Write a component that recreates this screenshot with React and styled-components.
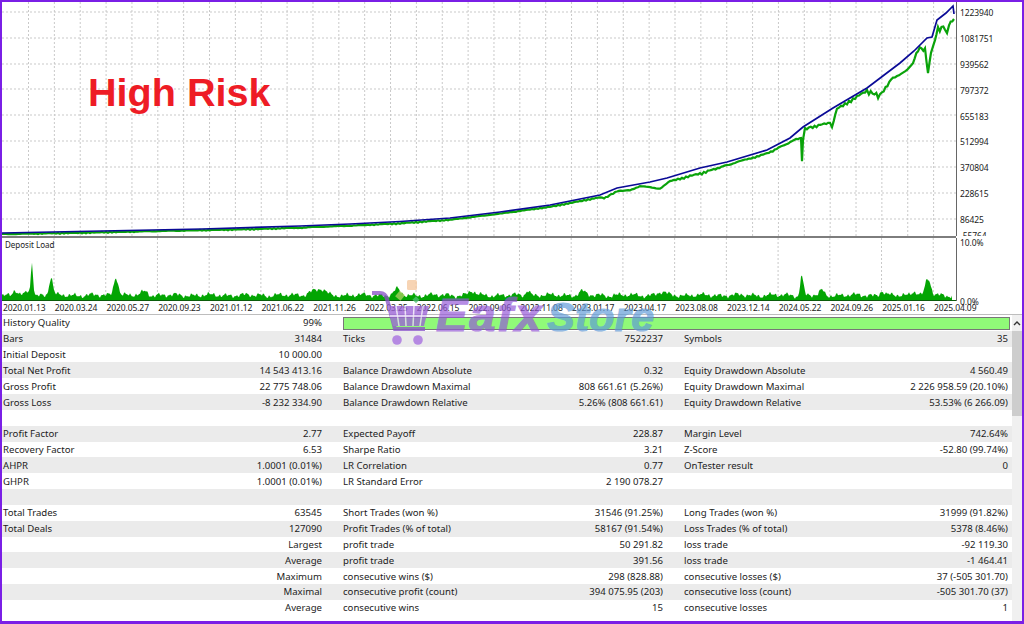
import React from "react";
import styled, { createGlobalStyle } from "styled-components";

const GlobalStyle = createGlobalStyle`
  html, body { margin: 0; padding: 0; background: #fff; }
  body { width: 1024px; height: 624px; overflow: hidden; font-family: "Noto Sans", "Open Sans", sans-serif; }
`;

const CHART_W = 954;

const balance = [
  [0, 231], [100, 229], [200, 227], [298, 224], [348, 222], [398, 219.5], [448, 216], [498, 210], [548, 203],
  [598, 193], [615, 186], [648, 180], [665, 176], [698, 166], [725, 160], [765, 148], [788, 136], [801, 125],
  [831, 106], [865, 86], [898, 61], [912, 49], [925, 36], [930, 35], [935, 18], [944, 11], [951, 4], [952, 12],
];

const equity = [
  [0, 232], [100, 230], [200, 228], [298, 225.5], [348, 223.5], [398, 221], [448, 217.5], [498, 211.5],
  [548, 204.5], [598, 195], [602, 196], [615, 189], [628, 188], [638, 184], [658, 186], [668, 179], [678, 176],
  [698, 171], [731, 161], [765, 151], [796, 136], [799, 136], [800, 158], [801, 135], [803, 126], [828, 120],
  [830, 125], [835, 106], [865, 88], [878, 92], [891, 75], [905, 68], [911, 61], [916, 45], [923, 46], [926, 71],
  [929, 50], [933, 38], [936, 25], [943, 24], [945, 31], [947, 20], [952, 17],
];

// equity dips under the straight segments, harder towards the right of the test
const grainy = (pts) => {
  const out = [];
  for (let i = 0; i < pts.length - 1; i++) {
    const [x0, y0] = pts[i];
    const [x1, y1] = pts[i + 1];
    const steps = Math.max(1, Math.round((x1 - x0) / 2));
    for (let s = 0; s < steps; s++) {
      const x = x0 + ((x1 - x0) * s) / steps;
      const y = y0 + ((y1 - y0) * s) / steps;
      const amp = x > 860 ? 5 : x > 640 ? 3 : 1;
      const wob = Math.abs(Math.sin(x * 2.3) * Math.cos(x * 0.71));
      out.push([x, y + wob * wob * amp]);
    }
  }
  out.push(pts[pts.length - 1]);
  return out;
};

const toLine = (pts) => pts.map(([x, y]) => `${x.toFixed(1)},${y.toFixed(1)}`).join(" ");

const spikes = [
  [30, 33, 1.1], [49, 18, 1.8], [114, 19, 2.2], [13, 5, 2], [26, 4, 2], [143, 4, 3], [320, 4, 4], [395, 6, 3],
  [470, 4, 3], [526, 5, 2], [580, 4, 3], [660, 3, 4], [799, 17, 1], [801, 11, 1.2], [820, 5, 2], [880, 4, 2],
  [912, 4, 3], [925, 13, 2], [928, 8, 2], [312, 4, 6],
];

const loadArea = () => {
  const pts = [[0, 63]];
  for (let x = 0; x <= 950; x += 1) {
    const noise =
      4 +
      1.3 * Math.sin(x * 0.37) +
      1.1 * Math.sin(x * 1.13 + 1) +
      0.8 * Math.sin(x * 2.17) +
      1.3 * Math.abs(Math.sin(x * 0.083));
    let h = noise;
    spikes.forEach(([c, a, w]) => {
      h += a * Math.exp(-((x - c) * (x - c)) / (2 * w * w));
    });
    pts.push([x, 62 - h]);
  }
  pts.push([950, 63]);
  return toLine(pts);
};

const yLabels = ["1223940", "1081751", "939562", "797372", "655183", "512994", "370804", "228615", "86425"];
const dates = [
  "2020.01.13", "2020.03.24", "2020.05.27", "2020.09.23", "2021.01.12", "2021.06.22", "2021.11.26",
  "2022.03.25", "2022.06.15", "2022.09.06", "2022.11.08", "2023.01.17", "2023.04.17", "2023.08.08",
  "2023.12.14", "2024.05.22", "2024.09.26", "2025.01.16", "2025.04.09",
];

const rows = [
  ["History Quality", "99%"],
  ["Bars", "31484", "Ticks", "7522237", "Symbols", "35"],
  ["Initial Deposit", "10 000.00"],
  ["Total Net Profit", "14 543 413.16", "Balance Drawdown Absolute", "0.32", "Equity Drawdown Absolute", "4 560.49"],
  ["Gross Profit", "22 775 748.06", "Balance Drawdown Maximal", "808 661.61 (5.26%)", "Equity Drawdown Maximal", "2 226 958.59 (20.10%)"],
  ["Gross Loss", "-8 232 334.90", "Balance Drawdown Relative", "5.26% (808 661.61)", "Equity Drawdown Relative", "53.53% (6 266.09)"],
  [],
  ["Profit Factor", "2.77", "Expected Payoff", "228.87", "Margin Level", "742.64%"],
  ["Recovery Factor", "6.53", "Sharpe Ratio", "3.21", "Z-Score", "-52.80 (99.74%)"],
  ["AHPR", "1.0001 (0.01%)", "LR Correlation", "0.77", "OnTester result", "0"],
  ["GHPR", "1.0001 (0.01%)", "LR Standard Error", "2 190 078.27"],
  [],
  ["Total Trades", "63545", "Short Trades (won %)", "31546 (91.25%)", "Long Trades (won %)", "31999 (91.82%)"],
  ["Total Deals", "127090", "Profit Trades (% of total)", "58167 (91.54%)", "Loss Trades (% of total)", "5378 (8.46%)"],
  ["", "Largest", "profit trade", "50 291.82", "loss trade", "-92 119.30"],
  ["", "Average", "profit trade", "391.56", "loss trade", "-1 464.41"],
  ["", "Maximum", "consecutive wins ($)", "298 (828.88)", "consecutive losses ($)", "37 (-505 301.70)"],
  ["", "Maximal", "consecutive profit (count)", "394 075.95 (203)", "consecutive loss (count)", "-505 301.70 (37)"],
  ["", "Average", "consecutive wins", "15", "consecutive losses", "1"],
];

const Frame = styled.div`
  position: relative;
  box-sizing: border-box;
  width: 1024px;
  height: 624px;
  border: 2px solid #7a1fe6;
  border-bottom-width: 3px;
  background: #fff;
  display: flex;
  flex-direction: column;
  overflow: hidden;
  color: #1c1c1c;
`;

const ChartRow = styled.div`
  display: flex;
  height: ${(p) => p.$h}px;
  flex: none;
`;

const Plot = styled.div`
  position: relative;
  width: ${CHART_W}px;
  flex: none;
`;

const Headline = styled.div`
  position: absolute;
  left: 86px;
  top: 65px;
  font: bold 39.6px/50px "Liberation Sans", Arial, sans-serif;
  color: #ee1c25;
  white-space: nowrap;
`;

const PanelTag = styled.div`
  position: absolute;
  left: 3px;
  top: 1px;
  font-size: 8px;
  line-height: 11px;
  color: #222;
`;

const Axis = styled.div`
  flex: 1;
  border-left: 1px solid #666;
  display: flex;
  flex-direction: column;
  padding-left: 3px;
  padding-top: ${(p) => p.$top}px;
  gap: ${(p) => p.$gap}px;
  overflow: ${(p) => (p.$spill ? "visible" : "hidden")};
`;

const AxisLabel = styled.div`
  font-size: 8.5px;
  line-height: 10px;
  height: 10px;
  flex: none;
  color: #222;
  letter-spacing: -0.1px;
  margin-top: ${(p) => p.$pull || 0}px;
`;

const Divider = styled.div`
  height: 2px;
  width: 954px;
  flex: none;
  background: #7d7d7d;
`;

const Dates = styled.div`
  display: flex;
  height: 13px;
  flex: none;
  padding-left: 1px;
  border-bottom: 1px solid #bdbdbd;
`;

const DateLabel = styled.div`
  width: 51.72px;
  flex: none;
  font-size: 8.5px;
  line-height: 13px;
  color: #222;
  white-space: nowrap;
  letter-spacing: -0.1px;
`;

const Report = styled.div`
  flex: 1;
  display: flex;
  min-height: 0;
`;

const Table = styled.div`
  width: 1010px;
  flex: none;
`;

const Row = styled.div`
  display: grid;
  grid-template-columns: 340px 341px 329px;
  height: 15.84px;
  background: ${(p) => (p.$odd ? "#ebebeb" : "#fff")};
`;

const Cell = styled.div`
  display: flex;
  justify-content: space-between;
  align-items: center;
  padding: 0 ${(p) => p.$pad}px 0 1px;
  font-size: 9.6px;
  line-height: 15px;
  white-space: nowrap;
`;

const QualityBar = styled.div`
  grid-column: 2 / 4;
  box-sizing: border-box;
  height: 13px;
  margin: 2px 2px 0 1px;
  background: #90fa78;
  border: 1px solid #777;
`;

const Scrollbar = styled.div`
  flex: 1;
  background: #f0f0f0;
  display: flex;
  flex-direction: column;
`;

const ScrollUp = styled.div`
  height: 16px;
  flex: none;
  display: flex;
  align-items: center;
  justify-content: center;
`;

const ScrollThumb = styled.div`
  height: 85px;
  flex: none;
  background: #cdcdcd;
`;

const Watermark = styled.div`
  position: absolute;
  left: 368px;
  top: 276px;
  display: flex;
  align-items: flex-start;
  pointer-events: none;
`;

const MarkWord = styled.span`
  font: italic bold ${(p) => p.$size}px/44px "Liberation Sans", Arial, sans-serif;
  color: ${(p) => p.$c};
  -webkit-text-stroke: 1.2px ${(p) => p.$c};
  opacity: 0.68;
  margin: ${(p) => p.$m};
  letter-spacing: ${(p) => p.$ls}px;
`;

function MainChart() {
  const xs = Array.from({ length: 36 }, (_, i) => 26.5 + i * 25.86);
  const ys = [10, 36, 62, 87, 113, 139, 165, 191, 217];
  return (
    <svg width={CHART_W} height="234" style={{ display: "block" }}>
      {xs.map((x) => (
        <line key={x} x1={x} x2={x} y1="0" y2="234" stroke="#c9c9c9" strokeDasharray="2 2" />
      ))}
      {ys.map((y) => (
        <line key={y} x1="0" x2={CHART_W} y1={y} y2={y} stroke="#c9c9c9" strokeDasharray="2 2" />
      ))}
      <polyline points={toLine(grainy(equity))} fill="none" stroke="#0aa30a" strokeWidth="2.2" />
      <polyline points={toLine(balance)} fill="none" stroke="#0a0a96" strokeWidth="1.7" />
    </svg>
  );
}

function LoadChart() {
  const xs = Array.from({ length: 18 }, (_, i) => 52 + i * 51.72);
  return (
    <svg width={CHART_W} height="63" style={{ display: "block" }}>
      {xs.map((x) => (
        <line key={x} x1={x} x2={x} y1="0" y2="63" stroke="#c9c9c9" strokeDasharray="2 2" />
      ))}
      <polygon points={loadArea()} fill="#03a503" />
      <line x1="0" x2={CHART_W} y1="62.5" y2="62.5" stroke="#0b5d0b" />
    </svg>
  );
}

function Cart() {
  return (
    <svg width="66" height="72" viewBox="0 0 66 72" style={{ opacity: 0.78, flex: "none" }}>
      <rect x="37" y="2" width="10" height="10" rx="1.5" fill="#f6c9a0" />
      <rect x="27" y="14" width="7" height="7" fill="#a8d060" transform="rotate(40 30 17)" />
      <rect x="44" y="19" width="5" height="5" fill="#4cc070" transform="rotate(45 46 21)" />
      <path d="M2 15h8c4 0 6 2 7 6l8 30h30" fill="none" stroke="#8a55c8" strokeWidth="4" />
      <path d="M17 28h42l-5 20H23z" fill="#9a62d6" />
      <path d="M26 28l3 20M35 28l1 20M44 28l-1 20M53 28l-3 20M20 38h37" stroke="#e8dcf6" strokeWidth="1.5" />
      <circle cx="27" cy="62" r="4.8" fill="#a66ee0" />
      <circle cx="48" cy="62" r="4.8" fill="#a66ee0" />
    </svg>
  );
}

export default function App() {
  return (
    <>
      <GlobalStyle />
      <Frame>
        <ChartRow $h={234}>
          <Plot>
            <MainChart />
            <Headline>High Risk</Headline>
          </Plot>
          <Axis $top={6} $gap={15.9}>
            {yLabels.map((v) => (
              <AxisLabel key={v}>{v}</AxisLabel>
            ))}
            <AxisLabel $pull={-10}>-55764</AxisLabel>
          </Axis>
        </ChartRow>
        <Divider />
        <ChartRow $h={63}>
          <Plot>
            <LoadChart />
            <PanelTag>Deposit Load</PanelTag>
          </Plot>
          <Axis $top={0} $gap={49} $spill>
            <AxisLabel>10.0%</AxisLabel>
            <AxisLabel>0.0%</AxisLabel>
          </Axis>
        </ChartRow>
        <Dates>
          {dates.map((d) => (
            <DateLabel key={d}>{d}</DateLabel>
          ))}
        </Dates>
        <Report>
          <Table>
            {rows.map((r, i) => (
              <Row key={i} $odd={i % 2 === 1}>
                <Cell $pad={20}>
                  <span>{r[0]}</span>
                  <span>{r[1]}</span>
                </Cell>
                {i === 0 ? (
                  <QualityBar />
                ) : (
                  <>
                    <Cell $pad={20}>
                      <span>{r[2]}</span>
                      <span>{r[3]}</span>
                    </Cell>
                    <Cell $pad={4}>
                      <span>{r[4]}</span>
                      <span>{r[5]}</span>
                    </Cell>
                  </>
                )}
              </Row>
            ))}
          </Table>
          <Scrollbar>
            <ScrollUp>
              <svg width="8" height="6" viewBox="0 0 8 6">
                <path d="M1 5l3-3 3 3" fill="none" stroke="#333" strokeWidth="1.4" />
              </svg>
            </ScrollUp>
            <ScrollThumb />
          </Scrollbar>
        </Report>
        <Watermark>
          <Cart />
          <MarkWord $c="#9457d8" $size={47} $m="15px 0 0 0" $ls={2}>Eafx</MarkWord>
          <MarkWord $c="#5f9ad8" $size={41} $m="17px 0 0 4px" $ls={0.5}>Store</MarkWord>
        </Watermark>
      </Frame>
    </>
  );
}
